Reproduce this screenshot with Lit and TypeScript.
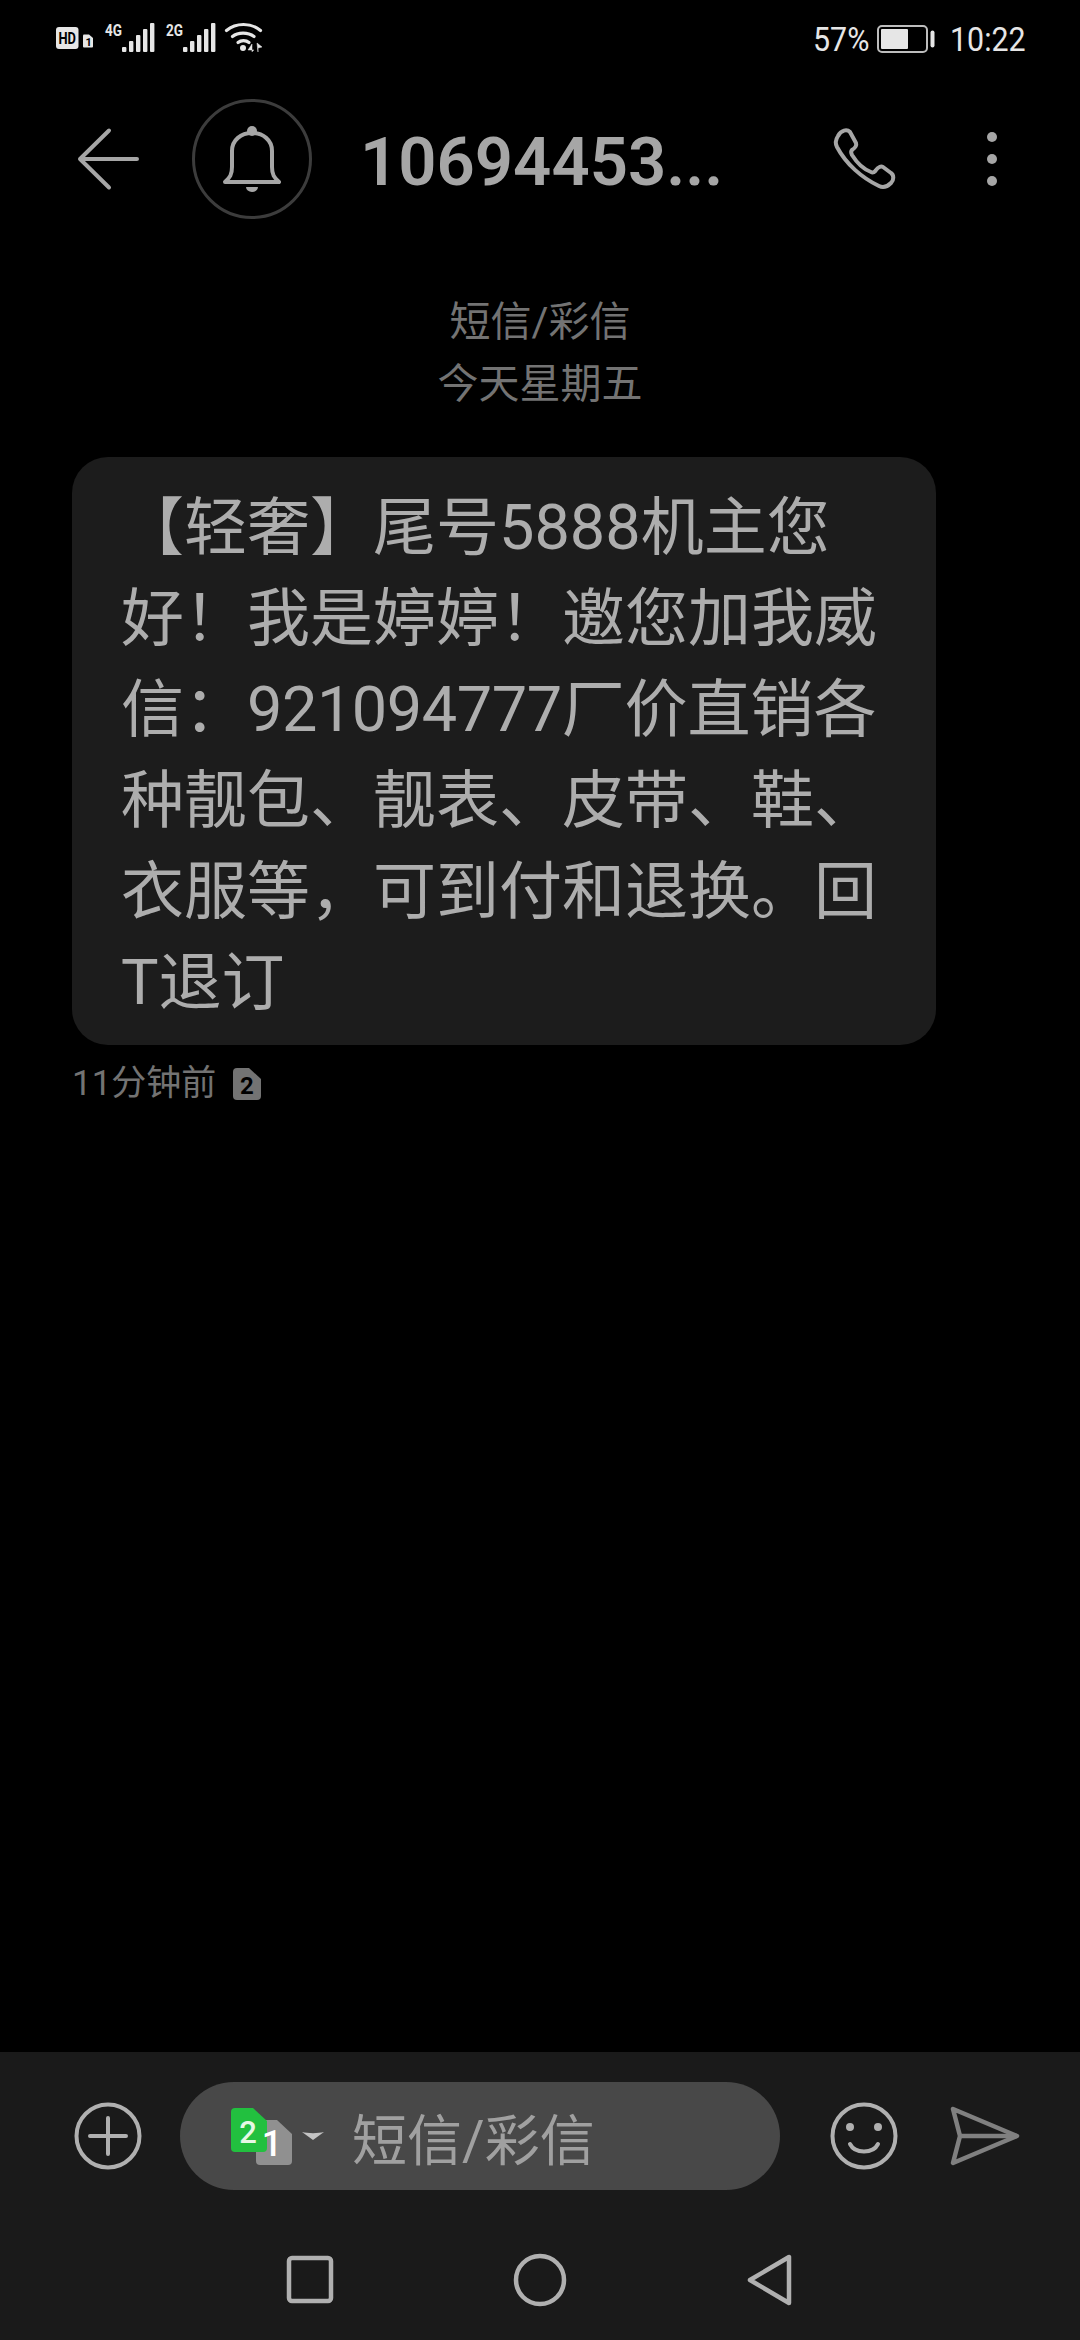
import { LitElement, html, css, svg } from "lit";
import { customElement } from "lit/decorators.js";

@customElement("app-root")
export class AppRoot extends LitElement {
  static styles = css`
    :host {
      display: flex;
      flex-direction: column;
      width: 1080px;
      height: 2340px;
      background: #000;
      overflow: hidden;
      font-family: Roboto, "Noto Sans CJK SC", sans-serif;
    }
    svg { display: block; flex: none; overflow: visible; }
    .status {
      height: 76px;
      flex: none;
      display: flex;
      align-items: flex-start;
      padding: 22px 57px 0 56px;
      box-sizing: border-box;
      color: #e6e6e6;
    }
    .status-left { display: flex; align-items: flex-start; }
    .status-right {
      margin-left: auto;
      display: flex;
      align-items: center;
      height: 30px;
      padding-top: 2px;
      font-size: 33px;
      font-weight: 400;
    }
    .pct { width: 55px; white-space: nowrap; transform: scaleX(0.92); transform-origin: left; }
    .clock { width: 73px; white-space: nowrap; transform: scaleX(0.92); transform-origin: left; }
    .battery { margin: 0 15px 0 9px; }

    .header {
      height: 166px;
      flex: none;
      display: flex;
      align-items: center;
      padding-left: 78px;
      box-sizing: border-box;
    }
    .title {
      margin-left: 48px;
      padding-top: 5px;
      font-size: 67px;
      font-weight: 600;
      color: #a6a6a6;
      white-space: nowrap;
    }
    .bell { margin-left: 54px; }
    .phone { margin-left: auto; }
    .more { margin: 0 83px 0 91px; }

    .meta {
      margin-top: 49px;
      text-align: center;
      font-size: 41px;
      line-height: 62px;
      color: #737373;
    }
    .bubble {
      margin: 42px 0 0 72px;
      width: 864px;
      box-sizing: border-box;
      padding: 25px 49px 17px;
      border-radius: 36px;
      background: #1c1c1c;
      color: #adadad;
      font-size: 63px;
      line-height: 91px;
      white-space: nowrap;
    }
    .num { letter-spacing: -0.45px; }
    .stamp {
      margin: 22px 0 0 72px;
      display: flex;
      align-items: center;
      gap: 17px;
      font-size: 35px;
      line-height: 34px;
      color: #737373;
    }
    .composer {
      margin-top: auto;
      height: 288px;
      flex: none;
      background: #1a1a1a;
      box-sizing: border-box;
      padding-top: 30px;
    }
    .input-row {
      display: flex;
      align-items: center;
      height: 108px;
      padding-left: 74px;
    }
    .pill {
      margin-left: 38px;
      width: 600px;
      height: 108px;
      border-radius: 54px;
      background: #484848;
      display: flex;
      align-items: center;
      padding-left: 51px;
      box-sizing: border-box;
    }
    .caret { margin-left: 10px; }
    .placeholder {
      margin-left: 28px;
      font-size: 55px;
      color: #a0a0a0;
      white-space: nowrap;
    }
    .smile { margin-left: 50px; }
    .send { margin-left: 53px; }
    .nav {
      margin-top: 60px;
      display: flex;
      justify-content: center;
      gap: 170px;
    }
  `;

  private bars(x: number) {
    return [0, 1, 2, 3, 4].map(
      (i) => svg`<rect x=${x + i * 7} y=${25 - i * 6} width="4.4" height=${5 + i * 6} rx="1" fill="#e6e6e6"></rect>`
    );
  }

  render() {
    return html`
      <div class="status">
        <div class="status-left">
          <svg width="206" height="30" viewBox="0 0 206 30">
            <rect x="0" y="5" width="22.5" height="22" rx="3" fill="#e6e6e6"></rect>
            <text x="2.5" y="22" font-size="16" font-weight="700" font-family="Roboto" fill="#000" textLength="17.5" lengthAdjust="spacingAndGlyphs">HD</text>
            <path d="M27 13.5a1 1 0 0 1 1-1h5l4 3.5v8.5a1 1 0 0 1-1 1h-8a1 1 0 0 1-1-1z" fill="#e6e6e6"></path>
            <text x="29.5" y="23.5" font-size="11" font-weight="700" font-family="Roboto" fill="#000">1</text>
            <text x="49" y="14" font-size="17" font-weight="700" font-family="Roboto" fill="#e6e6e6" textLength="17" lengthAdjust="spacingAndGlyphs">4G</text>
            <text x="110" y="14" font-size="17" font-weight="700" font-family="Roboto" fill="#e6e6e6" textLength="17" lengthAdjust="spacingAndGlyphs">2G</text>
            ${this.bars(66)}
            ${this.bars(127)}
          </svg>
          <svg width="40" height="30" viewBox="0 0 40 30" style="margin-left:-38px">
            <g fill="none" stroke="#e6e6e6" stroke-width="3.2" stroke-linecap="round">
              <path d="M2.5 8.5C12 0.5 27 0.5 36.5 8.5"></path>
              <path d="M8.5 14.5C14 10 24 10 30 14.5"></path>
              <path d="M14 20.5C17 18 22 18 25 20.5"></path>
            </g>
            <circle cx="19" cy="26" r="3" fill="#e6e6e6"></circle>
            <path d="M28 30v-8l-4 6h6M33 21l5 4-4 1v4z" fill="#e6e6e6" stroke="#e6e6e6" stroke-width="0.5"></path>
          </svg>
        </div>
        <div class="status-right">
          <span class="pct">57%</span>
          <svg class="battery" width="58" height="28" viewBox="0 0 58 28">
            <rect x="1" y="1" width="49" height="26" rx="4" fill="none" stroke="#bdbdbd" stroke-width="2"></rect>
            <rect x="4" y="4" width="27" height="20" rx="1" fill="#e6e6e6"></rect>
            <rect x="53.5" y="5.5" width="4" height="17" rx="2" fill="#e6e6e6"></rect>
          </svg>
          <span class="clock">10:22</span>
        </div>
      </div>

      <div class="header">
        <svg width="60" height="60" viewBox="0 0 60 60" fill="none" stroke="#a6a6a6" stroke-width="4" stroke-linecap="round" stroke-linejoin="round">
          <path d="M31 1.5L2 30l29 28.5M2 30h57"></path>
        </svg>
        <svg class="bell" width="120" height="120" viewBox="0 0 120 120" fill="none">
          <circle cx="60" cy="60" r="58.5" stroke="#3c3c3c" stroke-width="3"></circle>
          <path d="M33 83C38 78 40 76 40 68V52C40 41 49 34 60 34S80 41 80 52V68C80 76 82 78 87 83Z" stroke="#a6a6a6" stroke-width="4" stroke-linejoin="round"></path>
          <circle cx="60" cy="32" r="5" fill="#a6a6a6"></circle>
          <path d="M54 88h12a6 5 0 0 1-12 0z" fill="#a6a6a6"></path>
        </svg>
        <div class="title">10694453...</div>
        <svg class="phone" width="62" height="62" viewBox="0 0 62 62" fill="none" stroke="#a6a6a6" stroke-width="4" stroke-linejoin="round">
          <path d="M4 8C7 2 13 1 16 4L22 15C23 18 21 20 18 22C17 23 17 25 18 27C23 35 29 41 37 44C39 45 41 44 42 42C44 39 47 38 49 39L57 45C60 47 60 52 57 55C53 59 49 60 45 58C28 50 12 36 3 19C1 15 2 11 4 8Z"></path>
        </svg>
        <svg class="more" width="10" height="54" viewBox="0 0 10 54" fill="#a6a6a6">
          <circle cx="5" cy="5" r="5"></circle>
          <circle cx="5" cy="27" r="5"></circle>
          <circle cx="5" cy="49" r="5"></circle>
        </svg>
      </div>

      <div class="meta">
        <div>短信/彩信</div>
        <div>今天星期五</div>
      </div>

      <div class="bubble">
        <div>【轻奢】尾号5888机主您</div>
        <div>好！我是婷婷！邀您加我威</div>
        <div>信：<span class="num">921094777</span>厂价直销各</div>
        <div>种靓包、靓表、皮带、鞋、</div>
        <div>衣服等，可到付和退换。回</div>
        <div>T退订</div>
      </div>

      <div class="stamp">
        <span>11分钟前</span>
        <svg width="28" height="32" viewBox="0 0 28 32">
          <path d="M0 4a4 4 0 0 1 4-4h12l12 11v17a4 4 0 0 1-4 4H4a4 4 0 0 1-4-4z" fill="#737373"></path>
          <text x="14" y="26" text-anchor="middle" font-size="24" font-weight="700" font-family="Roboto" fill="#000">2</text>
        </svg>
      </div>

      <div class="composer">
        <div class="input-row">
          <svg width="68" height="68" viewBox="0 0 68 68" fill="none" stroke="#b0b0b0" stroke-width="4" stroke-linecap="round">
            <circle cx="34" cy="34" r="31.5"></circle>
            <path d="M16 34h36M34 16v36"></path>
          </svg>
          <div class="pill">
            <svg width="61" height="56" viewBox="0 0 61 56">
              <path d="M25 16a4 4 0 0 1 4-4h17l15 14v27a4 4 0 0 1-4 4H29a4 4 0 0 1-4-4z" fill="#909090"></path>
              <path d="M0 4a4 4 0 0 1 4-4h18l14 13v27a4 4 0 0 1-4 4H4a4 4 0 0 1-4-4z" fill="#22c03f"></path>
              <text x="17" y="35" text-anchor="middle" font-size="31" font-weight="500" font-family="Roboto" fill="#e6f8e6">2</text>
              <text x="41" y="48" text-anchor="middle" font-size="36" font-weight="500" font-family="Roboto" fill="#fff">1</text>
            </svg>
            <svg class="caret" width="22" height="8" viewBox="0 0 22 8">
              <path d="M0 0C6 1.5 16 1.5 22 0L11 8z" fill="#c4c4c4"></path>
            </svg>
            <span class="placeholder">短信/彩信</span>
          </div>
          <svg class="smile" width="68" height="68" viewBox="0 0 68 68" fill="none" stroke="#b0b0b0" stroke-width="4" stroke-linecap="round">
            <circle cx="34" cy="34" r="31.5"></circle>
            <path d="M20 42C25 52 43 52 48 42" stroke-width="4"></path>
            <circle cx="20" cy="25" r="4" fill="#b0b0b0" stroke="none"></circle>
            <circle cx="48" cy="25" r="4" fill="#b0b0b0" stroke="none"></circle>
          </svg>
          <svg class="send" width="68" height="58" viewBox="0 0 68 58" fill="none" stroke="#808080" stroke-width="4.5" stroke-linejoin="round">
            <path d="M2 2L66 29L2 56L9 29Z"></path>
            <path d="M9 29H66"></path>
          </svg>
        </div>
        <div class="nav">
          <svg width="60" height="60" viewBox="0 0 60 60" fill="none" stroke="#b0b0b0" stroke-width="4.5">
            <rect x="9" y="8" width="42" height="43" rx="3"></rect>
          </svg>
          <svg width="60" height="60" viewBox="0 0 60 60" fill="none" stroke="#b0b0b0" stroke-width="4.5">
            <circle cx="30" cy="30" r="24"></circle>
          </svg>
          <svg width="60" height="60" viewBox="0 0 60 60" fill="none" stroke="#b0b0b0" stroke-width="4.5" stroke-linejoin="round">
            <path d="M10 30L49 7V53Z"></path>
          </svg>
        </div>
      </div>
    `;
  }
}
